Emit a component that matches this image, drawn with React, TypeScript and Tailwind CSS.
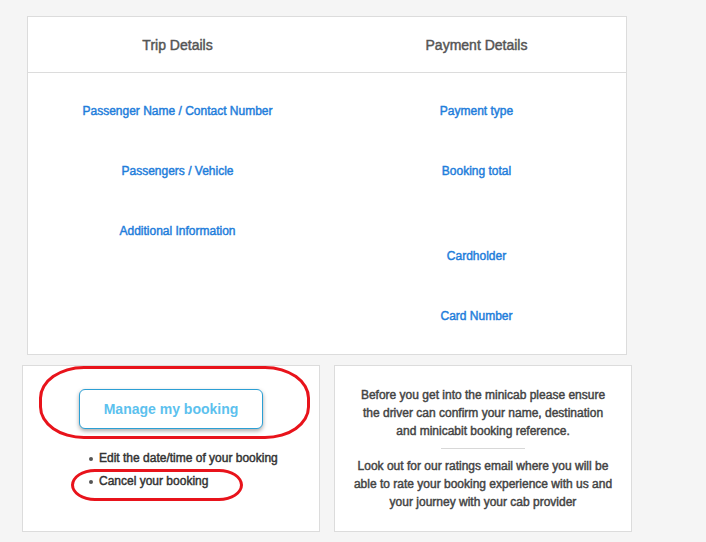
const tripItems = ["Passenger Name / Contact Number", "Passengers / Vehicle", "Additional Information"];

const font = "font-['Liberation_Sans',Arial,sans-serif]";
const heavy = "[-webkit-text-stroke:0.45px_currentColor]";

function Label({ children, className = "" }: { children: React.ReactNode; className?: string }) {
  return (
    <div className={`h-4 text-[12px] leading-4 text-[#1f7edb] ${heavy} ${className}`}>{children}</div>
  );
}

export default function App() {
  return (
    <div className={`min-h-screen bg-[#f5f5f5] pt-4 ${font}`}>
      {/* Trip / payment summary */}
      <div className="ml-[27px] w-[600px] border border-[#dcdcdc] bg-white">
        <div className="grid h-[56px] grid-cols-2 border-b border-[#dcdcdc]">
          <div className={`flex items-center justify-center pt-px text-[14px] text-[#555] ${heavy}`}>Trip Details</div>
          <div className={`flex items-center justify-center pt-px text-[14px] text-[#555] ${heavy}`}>Payment Details</div>
        </div>
        <div className="grid grid-cols-2 text-center">
          <div className="flex flex-col gap-[44px] pt-[30px]">
            {tripItems.map((t) => (
              <Label key={t}>{t}</Label>
            ))}
          </div>
          <div className="flex flex-col gap-[44px] pt-[30px] pb-[30px]">
            <Label>Payment type</Label>
            <Label className="mb-[25px]">Booking total</Label>
            <Label>Cardholder</Label>
            <Label>Card Number</Label>
          </div>
        </div>
      </div>

      <div className="mt-[10px] ml-[22px] flex gap-[14px]">
        {/* Manage booking */}
        <div className="relative h-[167px] w-[298px] border border-[#dcdcdc] bg-white pt-[23px]">
          <div className="flex justify-center">
            <button className="h-[40px] w-[184px] rounded-[6px] border border-[#2b9fd4] bg-white text-[14px] font-bold text-[#5cc1ee] shadow-[0_2px_4px_rgba(0,0,0,0.35)]">
              Manage my booking
            </button>
          </div>
          <ul className={`mt-[18px] ml-[66px] text-[12px] leading-[23px] text-[#333] ${heavy}`}>
            <li className="flex items-center gap-[6px]">
              <span className="h-[4px] w-[4px] rounded-full bg-[#555]" />
              Edit the date/time of your booking
            </li>
            <li className="flex items-center gap-[6px]">
              <span className="h-[4px] w-[4px] rounded-full bg-[#555]" />
              Cancel your booking
            </li>
          </ul>
          {/* red annotation marks */}
          <div className="absolute top-0 left-[16px] h-[73px] w-[271px] rounded-[45px_/_32px] border-[3px] border-[#e8131b]" />
          <div className="absolute top-[103px] left-[48px] h-[32px] w-[172px] rounded-[24px_/_16px] border-[3px] border-[#e8131b]" />
        </div>

        {/* Driver note */}
        <div className={`h-[167px] w-[298px] border border-[#dcdcdc] bg-white pt-[20px] text-center text-[12px] leading-[18px] text-[#444] ${heavy}`}>
          <p>
            Before you get into the minicab please ensure
            <br />
            the driver can confirm your name, destination
            <br />
            and minicabit booking reference.
          </p>
          <div className="mx-auto my-[8px] h-px w-[84px] bg-[#d8d8d8]" />
          <p>
            Look out for our ratings email where you will be
            <br />
            able to rate your booking experience with us and
            <br />
            your journey with your cab provider
          </p>
        </div>
      </div>
    </div>
  );
}
